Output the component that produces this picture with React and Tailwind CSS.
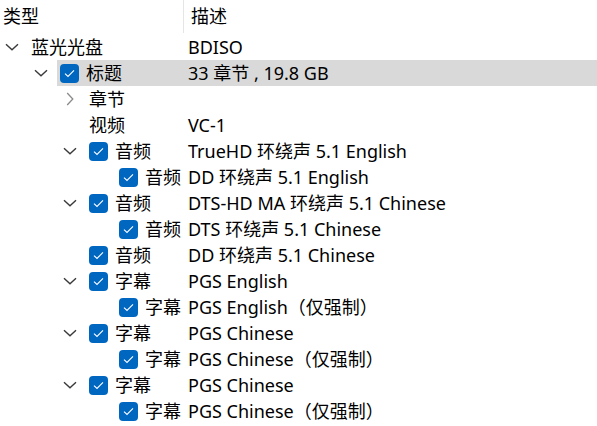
import React from "react";

const rows = [
  { l: 0, ch: "down", cb: false, t: "蓝光光盘", d: "BDISO" },
  { l: 1, ch: "down", cb: true, t: "标题", d: "33 章节 , 19.8 GB", sel: true },
  { l: 2, ch: "right", cb: false, t: "章节", d: "" },
  { l: 2, ch: null, cb: false, t: "视频", d: "VC-1" },
  { l: 2, ch: "down", cb: true, t: "音频", d: "TrueHD 环绕声 5.1 English" },
  { l: 3, ch: null, cb: true, t: "音频", d: "DD 环绕声 5.1 English" },
  { l: 2, ch: "down", cb: true, t: "音频", d: "DTS-HD MA 环绕声 5.1 Chinese" },
  { l: 3, ch: null, cb: true, t: "音频", d: "DTS 环绕声 5.1 Chinese" },
  { l: 2, ch: null, cb: true, t: "音频", d: "DD 环绕声 5.1 Chinese" },
  { l: 2, ch: "down", cb: true, t: "字幕", d: "PGS English" },
  { l: 3, ch: null, cb: true, t: "字幕", d: "PGS English（仅强制）" },
  { l: 2, ch: "down", cb: true, t: "字幕", d: "PGS Chinese" },
  { l: 3, ch: null, cb: true, t: "字幕", d: "PGS Chinese（仅强制）" },
  { l: 2, ch: "down", cb: true, t: "字幕", d: "PGS Chinese" },
  { l: 3, ch: null, cb: true, t: "字幕", d: "PGS Chinese（仅强制）" },
];

const padL = ["pl-[1px]", "pl-[30px]", "pl-[59px]", "pl-[89px]"];
const labelW = ["w-[160px]", "w-[131px]", "w-[102px]", "w-[72px]"];

function Chevron({ dir }) {
  if (dir === "down")
    return (
      <svg width="14" height="8" viewBox="0 0 14 8" fill="none">
        <path d="M1 1.2 L7 6.8 L13 1.2" stroke="#3a3a3a" strokeWidth="1.4" strokeLinejoin="miter" />
      </svg>
    );
  if (dir === "right")
    return (
      <svg width="8" height="14" viewBox="0 0 8 14" fill="none">
        <path d="M1.2 1 L6.8 7 L1.2 13" stroke="#8a8a8a" strokeWidth="1.3" />
      </svg>
    );
  return null;
}

function Check() {
  return (
    <div className="w-[19px] h-[19px] rounded-[4px] bg-[#0067c0] flex items-center justify-center shrink-0">
      <svg width="11" height="9" viewBox="0 0 11 9" fill="none">
        <path d="M1 4.6 L4 7.4 L10 1.4" stroke="#ffffff" strokeWidth="1.1" />
      </svg>
    </div>
  );
}

export default function App() {
  return (
    <div
      className="w-[597px] h-[426px] bg-white text-black overflow-hidden text-[18px]"
      style={{ fontFamily: '"Noto Sans", "Noto Sans CJK SC", sans-serif' }}
    >
      <div className="flex h-[34px] items-start">
        <div className="w-[184px] h-[33px] border-r border-[#e5e5e5] pl-[3px] flex items-center">类型</div>
        <div className="pl-[7px] h-[33px] flex items-center">描述</div>
      </div>
      {rows.map((r, i) => (
        <div key={i} className={`flex h-[26px] items-stretch ${padL[r.l]}`}>
          <div className="w-[22px] flex items-center justify-center shrink-0">
            <Chevron dir={r.ch} />
          </div>
          <div className="w-[5px] shrink-0" />
          <div className={`flex flex-1 items-center ${r.sel ? "bg-[#d9d9d9]" : ""}`}>
            <div className={`${labelW[r.l]} shrink-0 pl-[3px] flex items-center whitespace-nowrap`}>
              {r.cb && <Check />}
              <span className={r.cb ? "ml-[7px]" : ""}>{r.t}</span>
            </div>
            <div className="whitespace-nowrap">{r.d}</div>
          </div>
        </div>
      ))}
    </div>
  );
}
